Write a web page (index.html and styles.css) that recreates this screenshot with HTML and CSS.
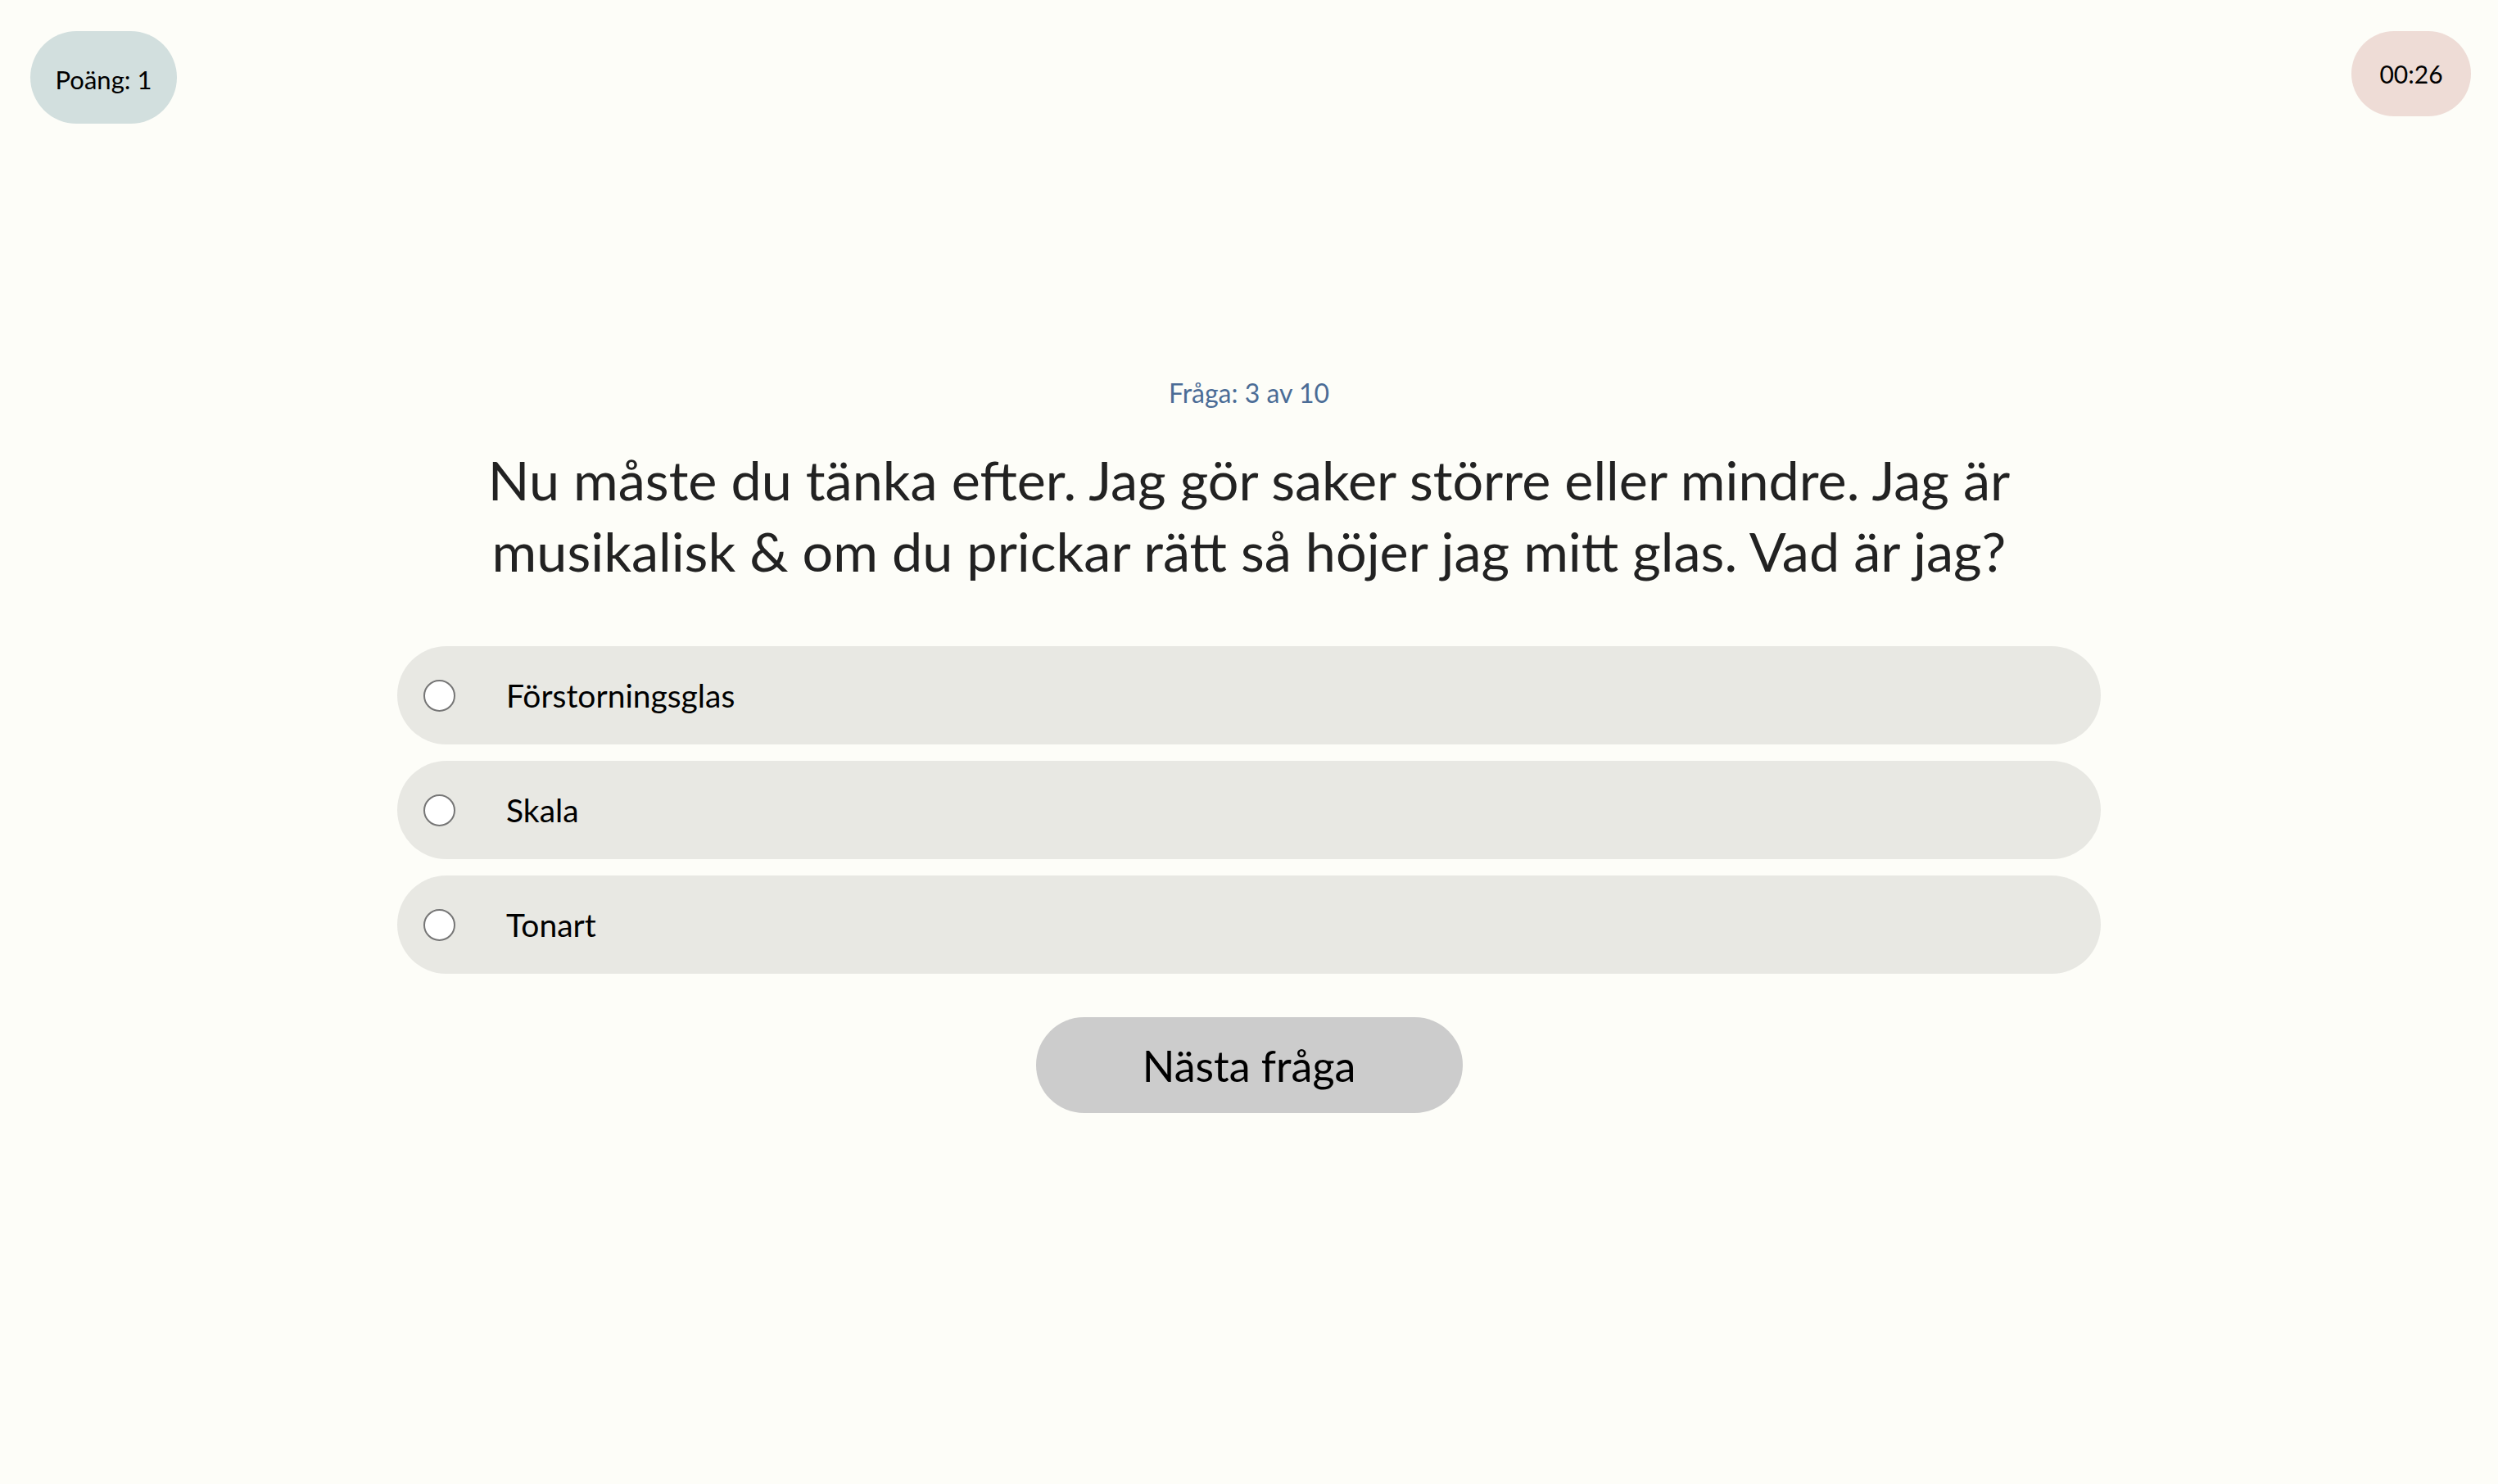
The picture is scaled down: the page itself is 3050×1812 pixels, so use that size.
FILE: index.html
```html
<!DOCTYPE html>
<html lang="sv">
<head>
<meta charset="utf-8">
<title>Quiz</title>
<link rel="stylesheet" href="styles.css">
</head>
<body>
<header class="topbar">
  <div class="pill score">Poäng: 1</div>
  <div class="pill timer">00:26</div>
</header>
<main class="quiz">
  <p class="counter">Fråga: 3 av 10</p>
  <h1 class="question">Nu måste du tänka efter. Jag gör saker större eller mindre. Jag är musikalisk &amp; om du prickar rätt så höjer jag mitt glas. Vad är jag?</h1>
  <ul class="options">
    <li><label class="option"><input type="radio" name="answer" class="radio"><span class="option-text">Förstorningsglas</span></label></li>
    <li><label class="option"><input type="radio" name="answer" class="radio"><span class="option-text">Skala</span></label></li>
    <li><label class="option"><input type="radio" name="answer" class="radio"><span class="option-text">Tonart</span></label></li>
  </ul>
  <button class="next" type="button">Nästa fråga</button>
</main>
</body>
</html>
```
FILE: styles.css
```css
* { box-sizing: border-box; }
html, body { margin: 0; padding: 0; }
body {
  background: #fdfdf8;
  font-family: Lato, "Noto Sans", sans-serif;
  color: #000;
  min-height: 1812px;
}
.topbar {
  display: flex;
  justify-content: space-between;
  align-items: flex-start;
  padding: 38px 33px 0 37px;
}
.pill {
  display: flex;
  align-items: center;
  justify-content: center;
  border-radius: 60px;
  color: #000;
}
.score {
  background: #d2dfde;
  height: 113px;
  width: 179px;
  font-size: 31px;
  padding-top: 4px;
}
.timer {
  background: #eedcd6;
  height: 104px;
  width: 146px;
  font-size: 30px;
}
.quiz {
  width: 2080px;
  margin: 0 auto;
  display: flex;
  flex-direction: column;
  align-items: center;
  padding-top: 309px;
}
.counter {
  margin: 0;
  font-size: 32px;
  line-height: 40px;
  color: #4b6c96;
}
.question {
  margin: 42px 0 0;
  font-size: 66.5px;
  line-height: 87px;
  font-weight: 400;
  color: #222;
  text-align: center;
}
.options {
  list-style: none;
  margin: 73px 0 0;
  padding: 0;
  width: 100%;
  display: flex;
  flex-direction: column;
  gap: 20px;
}
.option {
  display: flex;
  align-items: center;
  height: 120px;
  padding-left: 32px;
  background: #e8e8e3;
  border-radius: 60px;
  cursor: pointer;
}
.radio {
  appearance: none;
  -webkit-appearance: none;
  margin: 0;
  width: 39px;
  height: 39px;
  border: 2px solid #767676;
  border-radius: 50%;
  background: #fff;
  flex: none;
}
.option-text {
  margin-left: 62px;
  font-size: 39px;
  color: #000;
}
.next {
  margin-top: 53px;
  width: 521px;
  height: 117px;
  border: none;
  border-radius: 59px;
  background: #cccccc;
  font-family: Lato, "Noto Sans", sans-serif;
  font-size: 52px;
  color: #000;
  cursor: pointer;
}
```
